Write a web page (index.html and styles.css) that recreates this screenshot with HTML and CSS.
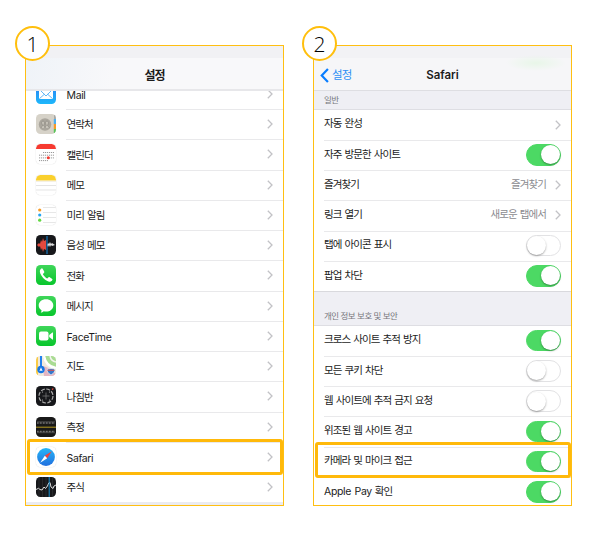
FILE: index.html
```html
<!DOCTYPE html>
<html lang="ko">
<head>
<meta charset="utf-8">
<title>설정</title>
<link rel="stylesheet" href="styles.css">
</head>
<body>
<svg width="0" height="0" class="defs">
  <defs>
    <linearGradient id="green" x1="0" y1="0" x2="0" y2="1"><stop offset="0" stop-color="#3fd65a"/><stop offset="1" stop-color="#08c62c"/></linearGradient>
    <linearGradient id="blue" x1="0" y1="0" x2="0" y2="1"><stop offset="0" stop-color="#2c7df3"/><stop offset="1" stop-color="#1db8fb"/></linearGradient>
    <linearGradient id="compass" x1="0" y1="0" x2="0" y2="1"><stop offset="0" stop-color="#25b5f7"/><stop offset="1" stop-color="#2170df"/></linearGradient>
    <clipPath id="tile"><rect width="20" height="20" rx="4.5"/></clipPath>
    <symbol id="chev" viewBox="0 0 6 10"><path d="M.8 .8 5 5 .8 9.2" fill="none" stroke="#c2c2c6" stroke-width="1.3"/></symbol>
  </defs>
</svg>
<main class="stage">
  <section class="phone">
    <div class="badge">1</div>
    <div class="screen">
      <header class="bar bar-main"><h1 class="title">설정</h1></header>
      <ul class="list apps">
        <li class="row"><svg class="icon" viewBox="0 0 20 20"><g clip-path="url(#tile)"><rect width="20" height="20" fill="url(#blue)"/><rect x="3" y="5" width="14" height="10" rx="1" fill="#fff"/><path d="M3.4 5.4 10 12l6.600-6.600M3.500 14.600 8.300 10.300M16.500 14.600 11.700 10.300" fill="none" stroke="#39a5f5" stroke-width=".8"/></g></svg><span class="name en">Mail</span><svg class="chev"><use href="#chev"/></svg></li>
        <li class="row"><svg class="icon" viewBox="0 0 20 20"><g clip-path="url(#tile)"><rect width="20" height="20" fill="#d6d2c8"/><path d="M18 0h2v6h-2z" fill="#a9a9a5"/><path d="M17.800 5h2.200v5h-2.200z" fill="#4daff0"/><path d="M17.800 10h2.200v5h-2.200z" fill="#f79a27"/><path d="M17.800 15h2.200v4h-2.200z" fill="#58c457"/><circle cx="9" cy="10.500" r="6.200" fill="#aaa69d"/><path d="M5.200 14c0-2 1.500-1.500 1.500-2.700C5.200 9.500 5.300 7 7 7s1.800 2.500.7 4.300c0 1.200 1.300.7 1.300 2.700M9 14c0-2 1.300-1.500 1.300-2.700C9.200 9.500 9.300 7 11 7s1.800 2.500.5 4.300c0 1.200 1.700.7 1.700 2.700" fill="#c8c4ba" stroke="#85827b" stroke-width=".6"/></g></svg><span class="name">연락처</span><svg class="chev"><use href="#chev"/></svg></li>
        <li class="row"><svg class="icon edge" viewBox="0 0 20 20"><g clip-path="url(#tile)"><rect width="20" height="20" fill="#fff"/><path d="M0 0h20v5H0z" fill="#f63a30"/><path d="M7 8.500h11M3 11.200h15M3 13.900h15M3 16.600h9" stroke="#999" stroke-width="1" stroke-dasharray="1.200 .8"/><circle cx="12.300" cy="13.700" r="1.500" fill="#f63a30"/></g></svg><span class="name">캘린더</span><svg class="chev"><use href="#chev"/></svg></li>
        <li class="row"><svg class="icon edge" viewBox="0 0 20 20"><g clip-path="url(#tile)"><rect width="20" height="20" fill="#fff"/><path d="M0 0h20v5.500H0z" fill="#fad02d"/><path d="M0 6.300h20" stroke="#c8b77a" stroke-width=".5" stroke-dasharray=".5 .5"/><path d="M0 10.500h20M0 15h20" stroke="#d8d8d8" stroke-width=".7"/></g></svg><span class="name">메모</span><svg class="chev"><use href="#chev"/></svg></li>
        <li class="row"><svg class="icon edge" viewBox="0 0 20 20"><rect width="20" height="20" rx="4.500" fill="#fff"/><circle cx="3.700" cy="5" r="1.600" fill="#f79b25"/><circle cx="3.700" cy="10" r="1.600" fill="#24a5f3"/><circle cx="3.700" cy="15.200" r="1.600" fill="#62d843"/><path d="M7 2.500h13M7 7.500h13M7 12.500h13M7 17.500h13" stroke="#ddd" stroke-width=".7"/></svg><span class="name">미리 알림</span><svg class="chev"><use href="#chev"/></svg></li>
        <li class="row"><svg class="icon" viewBox="0 0 20 20"><rect width="20" height="20" rx="4.500" fill="#17181b"/><path d="M1 10 3 8l1 1 1-4 1 2 1-4 1 3 2-1v10l-2-1-1 3-1-4-1 2-1-4-1 1z" fill="#e3493e"/><path d="M11 10l1-2 1 1 1-2 1 2 1-1 3 2-3 1-1-1-1 2-1-2-1 2z" fill="#ddd"/><path d="M11 1v18" stroke="#1788dd" stroke-width="1"/></svg><span class="name">음성 메모</span><svg class="chev"><use href="#chev"/></svg></li>
        <li class="row"><svg class="icon" viewBox="0 0 20 20"><rect width="20" height="20" rx="4.500" fill="url(#green)"/><path d="M5.500 3.500C4 4.500 3.300 6 4.300 8.500c1.300 3.200 4 6 7 7.600 2 1 3.700.7 4.900-.9.500-.6.300-1-.3-1.500l-2.200-1.500c-.6-.4-1-.3-1.500.3l-.9 1c-.8.200-4.500-3.500-4.400-4.500l1-1c.5-.4.600-.8.300-1.400L6.800 3.900c-.4-.6-.8-.7-1.300-.4z" fill="#fff"/></svg><span class="name">전화</span><svg class="chev"><use href="#chev"/></svg></li>
        <li class="row"><svg class="icon" viewBox="0 0 20 20"><rect width="20" height="20" rx="4.500" fill="url(#green)"/><path d="M10 3.300c4.200 0 7.300 2.700 7.300 6.100s-3.100 6.200-7.300 6.200c-.8 0-1.600-.1-2.300-.3-.7.800-1.900 1.300-3.100 1.300.6-.6 1-1.400.9-2.400-1.700-1.200-2.800-2.900-2.800-4.800C2.700 6 5.800 3.300 10 3.300z" fill="#fff"/></svg><span class="name">메시지</span><svg class="chev"><use href="#chev"/></svg></li>
        <li class="row"><svg class="icon" viewBox="0 0 20 20"><rect width="20" height="20" rx="4.500" fill="url(#green)"/><rect x="3" y="5.500" width="9.500" height="9" rx="2" fill="#fff"/><path d="m13.200 9 3.200-2.600q.6-.4.600.3v6.600q0 .7-.6.300L13.200 11z" fill="#fff"/></svg><span class="name en">FaceTime</span><svg class="chev"><use href="#chev"/></svg></li>
        <li class="row"><svg class="icon" viewBox="0 0 20 20"><g clip-path="url(#tile)"><rect width="20" height="20" fill="#eee9dd"/><path d="M7 0h13v13C13 12 8 7 7 0z" fill="#a9dc93"/><path d="M8 0c1 7 6 11 12 12" fill="none" stroke="#fff" stroke-width="2.500"/><path d="M14 0q1 5 6 6" fill="none" stroke="#f4f4ef" stroke-width="1.500"/><path d="M0 0h2v20H0z" fill="#facb45"/><path d="M7 10q6 1 13 8v2H8z" fill="#e4b5c1"/><path d="M5 0v12" stroke="#2482ee" stroke-width="2"/><circle cx="5" cy="13.500" r="3.700" fill="#1577e5"/><path d="m5 11.200 1.600 4L5 14.500l-1.600.7z" fill="#fff"/><path d="M11.500 13q3.500-1 7 0 1.500 3-3.500 6-5-3-3.500-6z" fill="#3978ca" stroke="#fff" stroke-width=".6"/><path d="M11.700 14.300h6.600" stroke="#e54d43" stroke-width="1.100"/></g></svg><span class="name">지도</span><svg class="chev"><use href="#chev"/></svg></li>
        <li class="row"><svg class="icon" viewBox="0 0 20 20"><rect width="20" height="20" rx="4.500" fill="#17181b"/><circle cx="10" cy="10" r="7" fill="none" stroke="#aaa" stroke-width="1.200" stroke-dasharray="4 1.500"/><path d="M10 6.500v7M6.500 10h7" stroke="#777" stroke-width=".8"/><g fill="#bbb"><circle cx="6.500" cy="6" r=".6"/><circle cx="13.500" cy="6" r=".6"/><circle cx="6.500" cy="14" r=".6"/><circle cx="13.500" cy="14" r=".6"/></g><path d="m15.500 3 2-1-.5 2.200z" fill="#ff493f"/></svg><span class="name">나침반</span><svg class="chev"><use href="#chev"/></svg></li>
        <li class="row"><svg class="icon" viewBox="0 0 20 20"><rect width="20" height="20" rx="4.500" fill="#191919"/><path d="M1 6h18M1 14.500h18" stroke="#999" stroke-width="1.500" stroke-dasharray=".7 .8"/><path d="M1 4.800h18M1 15.700h18" stroke="#777" stroke-width=".5"/><path d="M0 10.200h20" stroke="#c6a820" stroke-width=".9"/></svg><span class="name">측정</span><svg class="chev"><use href="#chev"/></svg></li>
        <li class="row"><svg class="icon edge" viewBox="0 0 20 20"><rect width="20" height="20" rx="4.500" fill="#fff"/><circle cx="10" cy="10" r="8.900" fill="url(#compass)"/><path d="M15.800 4.200 8.800 8.800l2.400 2.400z" fill="#f1433b"/><path d="m4.200 15.800 7-4.600-2.400-2.400z" fill="#fff"/></svg><span class="name en">Safari</span><svg class="chev"><use href="#chev"/></svg></li>
        <li class="row"><svg class="icon" viewBox="0 0 20 20"><rect width="20" height="20" rx="4.500" fill="#17181b"/><path d="M3 0v20M6.500 0v20M10 0v20M16.500 0v20" stroke="#3a3a3d" stroke-width=".5"/><path d="M0 12.500 2.500 11.300 4 12.500 6 13l2-3 1.500 1.500 2-2.500 1.200-3 1.300-.5 1 4.500 2 1.500L18 9l2-1" fill="none" stroke="#ddd" stroke-width="1"/><path d="M13.200 0v20" stroke="#178dcc" stroke-width="1"/></svg><span class="name">주식</span><svg class="chev"><use href="#chev"/></svg></li>
      </ul>
    </div>
    <div class="mark mark-app"></div>
  </section>

  <section class="phone">
    <div class="badge">2</div>
    <div class="screen">
      <header class="bar bar-sub">
        <a class="back"><svg class="arrow" viewBox="0 0 8 14"><path d="M7.200 .9 1.400 7l5.800 6.100" fill="none" stroke="#087dff" stroke-width="2"/></svg><span>설정</span></a>
        <h1 class="title en">Safari</h1>
      </header>
      <h2 class="group first">일반</h2>
      <ul class="list">
        <li class="row"><span class="name">자동 완성</span><svg class="chev"><use href="#chev"/></svg></li>
        <li class="row"><span class="name">자주 방문한 사이트</span><i class="switch on"></i></li>
        <li class="row"><span class="name">즐겨찾기</span><span class="value">즐겨찾기</span><svg class="chev"><use href="#chev"/></svg></li>
        <li class="row"><span class="name">링크 열기</span><span class="value">새로운 탭에서</span><svg class="chev"><use href="#chev"/></svg></li>
        <li class="row"><span class="name">탭에 아이콘 표시</span><i class="switch"></i></li>
        <li class="row"><span class="name">팝업 차단</span><i class="switch on"></i></li>
      </ul>
      <h2 class="group">개인 정보 보호 및 보안</h2>
      <ul class="list">
        <li class="row"><span class="name">크로스 사이트 추적 방지</span><i class="switch on"></i></li>
        <li class="row"><span class="name">모든 쿠키 차단</span><i class="switch"></i></li>
        <li class="row"><span class="name">웹 사이트에 추적 금지 요청</span><i class="switch"></i></li>
        <li class="row"><span class="name">위조된 웹 사이트 경고</span><i class="switch on"></i></li>
        <li class="row"><span class="name">카메라 및 마이크 접근</span><i class="switch on"></i></li>
        <li class="row"><span class="name"><span class="en">Apple Pay</span> 확인</span><i class="switch on"></i></li>
      </ul>
    </div>
    <div class="mark mark-access"></div>
  </section>
</main>
</body>
</html>
```
FILE: styles.css
```css
* { box-sizing: border-box; }
body {
  margin: 0;
  background: #fff;
  color: #1c1c1c;
  font: 10.5px/1 Inter, "Noto Sans CJK KR", sans-serif;
  letter-spacing: -0.9px;
}
h1, h2, ul { margin: 0; padding: 0; list-style: none; }
.defs { position: absolute; }
.stage {
  display: flex;
  gap: 29px;
  height: 553px;
  padding: 45px 0 0 25px;
}
.phone {
  position: relative;
  width: 259px;
  height: 461px;
  padding: 1px;
  background: #ffbf12;
}
.screen {
  height: 100%;
  overflow: hidden;
  background: #fff;
}
.badge {
  position: absolute;
  z-index: 3;
  left: -10px;
  top: -19px;
  width: 35px;
  height: 35px;
  border: 2px solid #ffbf0d;
  border-radius: 50%;
  background: #fff;
  color: #000;
  font: 300 21px/32px "Open Sans", "Noto Sans", sans-serif;
  letter-spacing: 0;
  text-align: center;
}
.phone + .phone .badge { left: -11px; }

.bar {
  position: relative;
  z-index: 1;
  height: 45px;
  padding-top: 13px;
  border-bottom: 1px solid #dedee2;
}
.bar-main { background: linear-gradient(#f1f1f4 0 12px, transparent 12px), linear-gradient(100deg, #eff3f8, #f8f8fa 35%); border-bottom: 2px solid #e7e7ea; }
.bar-sub { background: radial-gradient(ellipse 30px 8px at 222px 17px, #e8f6e8, transparent), linear-gradient(#f2f2f5 0 12px, #f6f6f8 12px); }
.title {
  font-size: 12px;
  font-weight: 600;
  line-height: 33px;
  text-align: center;
  letter-spacing: -1px;
}
.title.en { font-size: 11.500px; letter-spacing: 0; }
.back {
  position: absolute;
  left: 6px;
  top: 13px;
  display: flex;
  align-items: center;
  gap: 3px;
  height: 32px;
  color: #2b8ef5;
  font-size: 11.500px;
}
.back span { padding-top: 1px; }
.arrow { width: 9px; height: 15px; }

.row {
  position: relative;
  display: flex;
  align-items: center;
  height: 30.250px;
  padding: 0 10px;
}
.row:not(:last-child)::after {
  content: "";
  position: absolute;
  left: 10px;
  right: 0;
  bottom: -1px;
  height: 1px;
  background: #e9e9eb;
}
.apps { margin-top: -12.200px; border-bottom: 3px solid #ebebf0; }
.apps .row:not(:last-child)::after { left: 40px; }
.icon { width: 20px; height: 20px; margin-right: 10.500px; flex: none; }
.edge { border-radius: 4.500px; box-shadow: 0 0 1px #bbb; }
.name { flex: 1; white-space: pre; word-spacing: 0.900px; }
.apps .name { padding-top: 3px; }
.apps .name.en { padding-top: 4px; }
.en { letter-spacing: -0.350px; }
.value { margin-right: 9px; color: #8b8b90; word-spacing: 1px; }
.chev { width: 6px; height: 10px; flex: none; }

.group {
  height: 34.500px;
  padding: 20px 10px 0;
  border-top: 1px solid #d9d9dd;
  border-bottom: 1px solid #dedee3;
  background: #efeff4;
  color: #76767b;
  font-size: 8.500px;
  font-weight: 400;
  line-height: 9px;
  letter-spacing: -0.5px;
}
.group.first { height: 18.500px; padding-top: 5px; border-top: 0; }

.switch {
  width: 35px;
  height: 21.500px;
  padding: 1px;
  border: 1px solid #e2e2e4;
  border-radius: 11px;
  background: #fff;
}
.switch::before {
  content: "";
  display: block;
  width: 19px;
  height: 19px;
  margin: -0.800px 0 0 -0.800px;
  border-radius: 50%;
  background: #fff;
  box-shadow: 0 1px 2px rgba(0, 0, 0, .35);
}
.switch.on { border-color: #4cd964; background: #4cd964; }
.switch.on::before { margin-left: 12.500px; }

.mark {
  position: absolute;
  z-index: 2;
  left: 2px;
  width: 256px;
  height: 36px;
  border: 3px solid #ffb90a;
  border-radius: 3px;
}
.mark-app { top: 394px; }
.mark-access { top: 397px; }
```
